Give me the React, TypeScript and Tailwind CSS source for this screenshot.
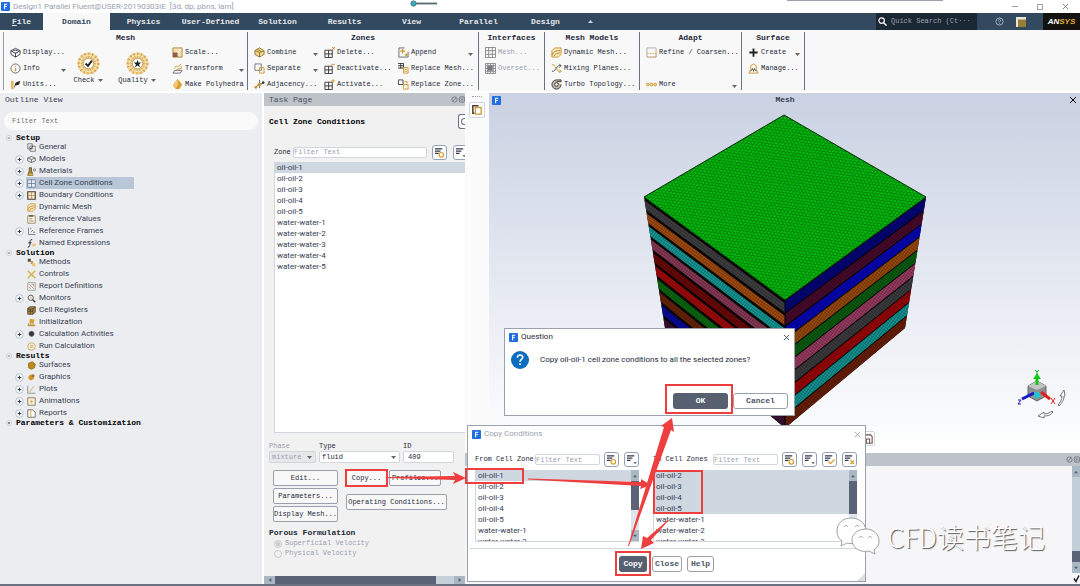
import React from 'react';

const GOLD = '#c9982e';
const INK = '#3b3f4a';

// Small 12x12 drawings shared by the ribbon, the tree and the toolbars
const drawings: Record<string, React.ReactNode> = {
  display: (
    <g fill="none" stroke={INK}>
      <path d="M1 4 6 1.5 11 4v4L6 11 1 8Z M1 4l5 2.5L11 4 M6 6.5V11" />
      <ellipse cx="6" cy="5" rx="3" ry="1.5" fill="#fff" />
    </g>
  ),
  info: (
    <g fill="none" stroke="#6d6a66">
      <circle cx="6" cy="6" r="5" />
      <path d="M6 5.5V9M6 3v1.2" stroke={GOLD} strokeWidth="1.4" />
    </g>
  ),
  units: (
    <g>
      <path d="M1 2h3v9H1z" fill="#e6b867" />
      <path d="M4 11 6 4l5-2-1 4-4 1Z" fill="#222" />
    </g>
  ),
  scale: (
    <g>
      <path d="M1 1h10v10H1z" fill="#f3dfb0" stroke="#ad8740" />
      <path d="M1 6h5v5H1z" fill="#8f5b4a" />
      <path d="M6 6l4-4" stroke="#fff" />
    </g>
  ),
  transform: (
    <g fill="none" stroke={GOLD}>
      <path d="M1 11h8l2-3H3Z" stroke="#6b6b70" />
      <path d="M3 6c0-4 4-2 4-2l3-3M5 7l5-1V3" />
    </g>
  ),
  poly: (
    <g>
      <path d="M6 0 11 6 8 11H4L1 7Z" fill="#d99a29" />
      <path d="M6 0 7 6 4 11 1 7Z" fill="#f0c670" />
    </g>
  ),
  combine: (
    <g fill="#f5d58d" stroke="#8e7434">
      <path d="M1 4 6 1l5 3v4l-5 3-5-3Z" />
      <path d="M1 4l5 2 5-2M6 6v5M3 2.5l6 3" fill="none" />
    </g>
  ),
  separate: (
    <g fill="none">
      <path d="M1 1h7v7H1z" stroke="#77747c" />
      <path d="M6 5h5v6H6z" stroke={GOLD} />
    </g>
  ),
  adjacency: (
    <g>
      <path d="M1 9 6 6l5-2M6 1v9" stroke="#666" fill="none" />
      <circle cx="6" cy="6" r="2" fill={GOLD} />
      <circle cx="10" cy="4" r="1.5" fill={INK} />
      <circle cx="2" cy="9" r="1.5" fill={GOLD} />
    </g>
  ),
  delete: (
    <g fill="none" stroke="#333">
      <path d="M1 3.5h8v8H1zM5 3.5v8M1 7.5h8" />
      <path d="M9 0l3 3m0-3L9 3" stroke="#cc6d24" />
    </g>
  ),
  deactivate: (
    <g fill="none" stroke="#333">
      <path d="M1 3.5h8v8H1zM5 3.5v8M1 7.5h8" />
      <path d="M8 1.5h4" stroke="#d99a29" />
    </g>
  ),
  activate: (
    <g fill="none" stroke="#333">
      <path d="M1 3.5h8v8H1zM5 3.5v8M1 7.5h8" />
      <path d="M8 2h4M10 0v4" stroke="#d99a29" />
    </g>
  ),
  append: (
    <g fill="none">
      <path d="M7 1H1v10h10V5" stroke="#66666c" />
      <path d="M5 2v5M2.500 4.500H8M9 7v3M7.500 8.500h3" stroke={GOLD} strokeWidth="1.400" />
    </g>
  ),
  replaceMesh: (
    <g fill="none">
      <path d="M0 .5h6v5H0M3 0v6M0 3h6" stroke="#333" />
      <path d="M6 5h5v6H6zM7 7h3M7 9h3" stroke={GOLD} />
    </g>
  ),
  replaceZone: (
    <g fill="none">
      <path d="M.5 1h5v5h-5z" stroke="#444" />
      <path d="M7 3h3v2M6 6h5v5H6z" stroke={GOLD} />
    </g>
  ),
  meshGrey: (
    <g fill="none" stroke="#88888c">
      <path d="M.5 .5h11v11H.5zM4 0v12M8 0v12M0 4h12M0 8h12" />
    </g>
  ),
  overset: (
    <g fill="none" stroke="#88888c">
      <path d="M.5 .5h11v11H.5zM3 0v12M6 0v12M9 0v12M0 3h12M0 6h12M0 9h12" />
      <path d="M3 3h5v5H3z" fill="#777" />
    </g>
  ),
  dynamic: (
    <g fill="none" stroke={GOLD}>
      <path d="M1 4 4 1h7v7l-3 3H1Z" fill="#f7e6bd" />
      <path d="M1 9c2-5 5-5 9-5M3 10c3-4 4-2 7-4" stroke="#b57d1a" />
    </g>
  ),
  mixing: (
    <g fill="none">
      <path d="M1 2h2l5 7h3M9 7l2 2-2 2" stroke={GOLD} />
      <path d="M1 9h2l5-6h3M9 1l2 2-2 2" stroke="#555" />
    </g>
  ),
  turbo: (
    <g stroke="#333" fill="none">
      <path d="M6 3h5V1H6a5 5 0 1 0 5 5" fill="#bdb9a8" />
      <circle cx="6" cy="6" r="2" fill="#eee" />
    </g>
  ),
  refine: (
    <g fill="none">
      <path d="M1 1h10v10H1z" stroke="#aaa" />
      <path d="M1 11h10v-4M1 7h10" stroke="#dcb05b" strokeDasharray="2 1" />
    </g>
  ),
  more: (
    <g fill="#f4d9a0" stroke={GOLD}>
      <circle cx="2" cy="6" r="1.5" />
      <circle cx="6" cy="6" r="1.5" />
      <circle cx="10" cy="6" r="1.5" />
    </g>
  ),
  plus: <path d="M6 1.5v9M1.5 6h9" stroke="#222" strokeWidth="2" />,
  manage: (
    <g fill="none" stroke={GOLD}>
      <path d="M1 11 3 7V3l3-2 3 2v4l2 4Z" />
      <path d="M3 9l2-3 1 3 1-3 2 3" stroke="#5a4c30" />
    </g>
  ),
  general: (
    <g fill="none" stroke="#666">
      <path d="M1 1h6v7H1zM4 4h7v7H4z" />
      <path d="M3 6l2 2 3-4" stroke="#333" />
    </g>
  ),
  models: (
    <g fill="none" stroke="#555">
      <path d="M1 4 6 2l5 2v4l-5 2-5-2ZM1 4l5 2 5-2M6 6v4" />
    </g>
  ),
  materials: (
    <g>
      <path d="M3 1h3v4l2 6H1l2-6Z" fill="#a98b38" stroke="#4b4023" />
      <path d="M2 9h6v2H2z" fill="#e4b42d" />
      <circle cx="10" cy="4" r="1.5" fill="none" stroke="#666" />
    </g>
  ),
  cell: (
    <g fill="#e8eef5" stroke="#61768c">
      <path d="M1 1h10v10H1zM6 1v10M1 6h10" />
    </g>
  ),
  boundary: (
    <g fill="#f7e7ca" stroke="#443b33">
      <path d="M1 1h10v10H1z" strokeWidth="1.5" />
      <path d="M6 1v10M1 6h10" stroke="#b38b4a" />
    </g>
  ),
  clipboard: (
    <g fill="#f6f3e8" stroke="#8b7a4c">
      <path d="M1 1h10v10H1z" />
      <path d="M3 0h5v2H3z" fill="#555" />
      <path d="M3 5h4M3 8h6" />
    </g>
  ),
  frames: (
    <g fill="none" stroke="#667">
      <path d="M2 1v9h9M5 7l3-3M5 3V1M8 7h3" />
    </g>
  ),
  fx: (
    <g fill="none">
      <path d="M7 1c-3-1-3 2-3 4S4 11 1 11M2 5h4" stroke="#222" strokeWidth="1.3" />
      <path d="M7 7h5M7 9h4" stroke="#e0a12e" />
    </g>
  ),
  methods: (
    <g>
      <path d="M1 1h4v4H1z" fill="#5a4a3a" />
      <path d="M5 4h3v4H5z" fill="#c59b43" />
      <path d="M7 7h4v4H7z" fill="#e8c465" />
    </g>
  ),
  controls: <path d="M1 1l10 10M11 1 1 11" stroke="#dcae52" strokeWidth="2" />,
  report: (
    <g fill="#f1efe8" stroke="#8a9a7a">
      <path d="M1 1h10v10H1z" />
      <path d="M3 3l6 6M3 7l2 2M6 3h3v3" stroke="#b27f8f" />
    </g>
  ),
  monitors: (
    <g fill="none" stroke="#333">
      <circle cx="5" cy="5" r="3.5" />
      <path d="M7.5 7.5 11 11" strokeWidth="1.8" />
      <path d="M4 5h2" stroke={GOLD} />
    </g>
  ),
  registers: (
    <g fill="#b58b3c" stroke="#40352a">
      <path d="M1 3l3-2h7v7l-3 3H1zM1 4h7v7M8 4l3-3M4.5 4v7M1 7h7" />
    </g>
  ),
  init: (
    <g>
      <path d="M4 1l6 1-1 5H3Z" fill="#dba12c" />
      <path d="M1 9h10v2H1z" fill="#c9952d" />
      <path d="M1 8h9" stroke="#7a6333" strokeDasharray="2 1" />
    </g>
  ),
  dot: <circle cx="6" cy="5" r="3.5" fill="#33343c" stroke="#777" />,
  run: (
    <g fill="#f4ead3" stroke="#bfa05c">
      <circle cx="6" cy="6" r="5" />
      <path d="M4 5h4M4 7h4" />
    </g>
  ),
  surfaces: <path d="M2 3 7 1l4 3-1 5-4 2-4-2Z" fill="#bd8a1d" stroke="#8a6718" />,
  graphics: (
    <g>
      <path d="M2 4l3-2 5 1-1 5-4 2-3-2Z" fill="#d39727" />
      <circle cx="8" cy="3.5" r="2" fill="#9b7440" />
    </g>
  ),
  plots: (
    <g fill="none">
      <path d="M1 1v10h10" stroke="#777" />
      <path d="M3 9c3 0 3-7 7-7" stroke="#caa04b" />
    </g>
  ),
  animations: (
    <g fill="#f8ecd5" stroke="#77684e">
      <path d="M1 1h10v10H1z" />
      <path d="M5 4l3 2-3 2Z" fill={GOLD} stroke="none" />
    </g>
  ),
  reports: (
    <g fill="#faf8f1" stroke="#555">
      <path d="M1 1h6l4 3v7H1z" />
      <path d="M5 1v10" stroke={GOLD} />
    </g>
  ),
  save: (
    <g fill="none" stroke="#6b5347" strokeWidth="1.3">
      <path d="M1 3V1h8l2 2v8H1M4 11V6h4v5M1 7h3" />
    </g>
  ),
  pages: (
    <g fill="none" stroke="#4f3a2a">
      <path d="M8 1H1v9h2" strokeWidth="1.8" />
      <path d="M4 3h7v8H4z" stroke={GOLD} strokeWidth="1.5" />
    </g>
  ),
};

const Icon = ({ name, className = 'size-[11px]' }: { name: string; className?: string }) => (
  <svg viewBox="0 0 12 12" className={`${className} shrink-0`} aria-hidden="true">
    {drawings[name]}
  </svg>
);

const Caret = ({ className = '' }: { className?: string }) => (
  <svg viewBox="0 0 5 3" className={`h-[3px] w-[5px] shrink-0 ${className}`} aria-hidden="true">
    <path d="M0 0h5L2.5 3Z" fill="#666" />
  </svg>
);

const AppLogo = () => (
  <svg viewBox="0 0 10 10" className="size-[9px] shrink-0" aria-hidden="true">
    <rect width="10" height="10" rx="1" fill="#1f6fe0" />
    <path d="M4 8V2.5h3M4 5h2.5" stroke="#fff" strokeWidth="1.2" fill="none" />
  </svg>
);

const Cross = ({ className = 'size-[7px] text-gray-700' }: { className?: string }) => (
  <svg viewBox="0 0 8 8" className={className} aria-hidden="true">
    <path d="M1 1l6 6M7 1 1 7" stroke="currentColor" fill="none" />
  </svg>
);

interface Command {
  icon: string;
  label: string;
  caret?: boolean;
  disabled?: boolean;
}

const Commands = ({ items, className }: { items: (Command | null)[]; className: string }) => (
  <div className={`flex shrink-0 flex-col ${className}`}>
    {items.map((item, i) =>
      item ? (
        <button
          key={item.label}
          disabled={item.disabled}
          className="flex h-4 items-center gap-[2px] whitespace-nowrap disabled:text-gray-400"
        >
          <Icon name={item.icon} />
          <span>{item.label}</span>
          {item.caret && <Caret className="mt-1 ml-auto" />}
        </button>
      ) : (
        <div key={i} className="h-4" />
      )
    )}
  </div>
);

const Group = ({ title, className, children }: { title: string; className: string; children: React.ReactNode }) => (
  <section className={`shrink-0 border-r border-gray-500 ${className}`}>
    <h2 className="h-3 text-center text-[8px] leading-3 font-bold">{title}</h2>
    <div className="flex pl-[6px]">{children}</div>
  </section>
);

const RoundCommand = ({ label, shape, className }: { label: string; shape: React.ReactNode; className: string }) => (
  <button className={`mt-2 flex h-8 flex-col items-center justify-between ${className}`}>
    <svg viewBox="0 0 24 24" className="size-[23px] shrink-0" aria-hidden="true">
      <circle cx="12" cy="12" r="8.5" fill="none" stroke="#f0d294" strokeWidth="6" />
      <circle cx="12" cy="12" r="8.5" fill="none" stroke="#cfa04a" strokeWidth="6" strokeDasharray="1 2.3" />
      <circle cx="12" cy="12" r="8.5" fill="none" stroke="#f7e8c4" />
      <circle cx="12" cy="12" r="5.5" fill="#fff" stroke="#c29a4e" />
      {shape}
    </svg>
    <span className="flex w-full items-center justify-center gap-[3px] leading-[8px]">
      {label}
      <Caret />
    </span>
  </button>
);

const Ribbon = () => (
  <div className="h-[63px] shrink-0 overflow-hidden border-b-2 border-white bg-[#f8f8f8] pt-[2px] pl-[3px]">
    <div className="flex h-[58px] border-l border-gray-400">
      <Group title="Mesh" className="w-[244px]">
        <Commands
          className="w-[56px]"
          items={[
            { icon: 'display', label: 'Display...' },
            { icon: 'info', label: 'Info', caret: true },
            { icon: 'units', label: 'Units...' },
          ]}
        />
        <RoundCommand
          label="Check"
          className="w-[44px]"
          shape={<path d="M9 12l2.5 2.5L15.5 9" stroke="#222" strokeWidth="2" fill="none" />}
        />
        <RoundCommand
          label="Quality"
          className="w-[54px]"
          shape={<path d="M12 8l1 3h3l-2.4 2 1 3-2.6-1.8L9.4 16l1-3L8 11h3Z" fill="#222" />}
        />
        <Commands
          className="ml-[8px] w-[72px]"
          items={[
            { icon: 'scale', label: 'Scale...' },
            { icon: 'transform', label: 'Transform', caret: true },
            { icon: 'poly', label: 'Make Polyhedra' },
          ]}
        />
      </Group>
      <Group title="Zones" className="w-[231px]">
        <Commands
          className="w-[64px]"
          items={[
            { icon: 'combine', label: 'Combine', caret: true },
            { icon: 'separate', label: 'Separate', caret: true },
            { icon: 'adjacency', label: 'Adjacency...' },
          ]}
        />
        <Commands
          className="ml-[6px] w-[68px]"
          items={[
            { icon: 'delete', label: 'Delete...' },
            { icon: 'deactivate', label: 'Deactivate...' },
            { icon: 'activate', label: 'Activate...' },
          ]}
        />
        <Commands
          className="ml-[6px] w-[75px]"
          items={[
            { icon: 'append', label: 'Append', caret: true },
            { icon: 'replaceMesh', label: 'Replace Mesh...' },
            { icon: 'replaceZone', label: 'Replace Zone...' },
          ]}
        />
      </Group>
      <Group title="Interfaces" className="w-[66px]">
        <Commands
          className="w-[56px]"
          items={[
            { icon: 'meshGrey', label: 'Mesh...', disabled: true },
            { icon: 'overset', label: 'Overset...', disabled: true },
          ]}
        />
      </Group>
      <Group title="Mesh Models" className="w-[95px]">
        <Commands
          className="w-[86px]"
          items={[
            { icon: 'dynamic', label: 'Dynamic Mesh...' },
            { icon: 'mixing', label: 'Mixing Planes...' },
            { icon: 'turbo', label: 'Turbo Topology...' },
          ]}
        />
      </Group>
      <Group title="Adapt" className="w-[102px]">
        <Commands
          className="w-[91px]"
          items={[
            { icon: 'refine', label: 'Refine / Coarsen...' },
            null,
            { icon: 'more', label: 'More', caret: true },
          ]}
        />
      </Group>
      <Group title="Surface" className="w-[63px]">
        <Commands
          className="w-[52px]"
          items={[
            { icon: 'plus', label: 'Create', caret: true },
            { icon: 'manage', label: 'Manage...' },
          ]}
        />
      </Group>
    </div>
  </div>
);

const TitleBar = () => (
  <header className="relative flex h-[13px] shrink-0 items-center gap-[3px] bg-white pl-[1px] font-['Roboto',sans-serif] text-[8px] text-gray-400">
    <AppLogo />
    <h1 className="whitespace-pre">Design1 Parallel Fluent@USER-20190303IE  [3d, dp, pbns, lam]</h1>
    <svg viewBox="0 0 32 8" className="absolute top-0 left-[408px] h-[7px] w-8" aria-hidden="true">
      <path d="M3 4h28" stroke="#4f6a75" strokeWidth="2" />
      <circle cx="4" cy="4" r="3" fill="#2bb3c4" stroke="#4f6a75" />
    </svg>
    <div className="absolute top-0 left-[787px] h-[1px] w-[156px] bg-gray-400" />
    <div className="ml-auto flex items-center gap-[19px] pr-[11px]">
      <button aria-label="Minimize" className="h-px w-[6px] bg-gray-400" />
      <button aria-label="Restore" className="size-[6px] border border-gray-400" />
      <button aria-label="Close">
        <Cross className="size-[7px] text-gray-500" />
      </button>
    </div>
  </header>
);

const tabs = ['Domain', 'Physics', 'User-Defined', 'Solution', 'Results', 'View', 'Parallel', 'Design'];

const TabBar = () => (
  <nav className="flex h-[17px] shrink-0 items-stretch bg-[#33495f] text-[8px] font-bold text-gray-200">
    <button className="w-[43px]">
      <u>F</u>ile
    </button>
    {tabs.map((tab) => (
      <button key={tab} className={tab === 'Domain' ? 'w-[67px] bg-[#f8f8f8] text-[#33495f]' : 'w-[67px]'}>
        {tab}
      </button>
    ))}
    <button aria-label="Collapse ribbon" className="pl-[9px]">
      <svg viewBox="0 0 5 3" className="h-[3px] w-[5px]" aria-hidden="true">
        <path d="M0 3h5L2.5 0Z" fill="#cfd6de" />
      </svg>
    </button>
    <div className="ml-auto flex items-center">
      <label className="flex h-full w-[101px] items-center gap-1 bg-[#1c2734] pl-[2px]">
        <svg viewBox="0 0 10 10" className="size-[9px] shrink-0" aria-label="Search">
          <circle cx="4" cy="4" r="3" stroke="#fff" strokeWidth="1.3" fill="none" />
          <path d="M6 6l3.5 3.5" stroke="#fff" strokeWidth="1.5" />
        </svg>
        <input
          className="w-20 text-[7px] font-normal placeholder:text-gray-400"
          placeholder="Quick Search (Ct···"
        />
      </label>
      <button aria-label="Help" className="ml-[18px]">
        <svg viewBox="0 0 10 10" className="size-[9px]">
          <circle cx="5" cy="5" r="4" stroke="#a9b4bf" fill="none" />
          <path d="M3.7 4c0-2 2.8-1.5 2.5 0C6 5 5 5 5 6M5 7v1" stroke="#a9b4bf" fill="none" />
        </svg>
      </button>
      <button aria-label="Layout" className="ml-3">
        <svg viewBox="0 0 10 10" className="size-[10px]">
          <rect width="10" height="10" fill="#e8e4d6" />
          <rect x="2" y="2.5" width="8" height="7.5" fill="#9a7d35" />
        </svg>
      </button>
      <span className="ml-[17px] flex h-full w-[37px] items-center justify-center bg-[#15130f] font-['Liberation_Sans',sans-serif] text-[8px] font-bold italic text-white">
        AN<span className="text-[#e2b23b]">SYS</span>
      </span>
    </div>
  </nav>
);

interface TreeNode {
  label: string;
  icon?: string;
  open?: boolean;
  selected?: boolean;
}

// Nodes without an icon are section headings
const tree: TreeNode[] = [
  { label: 'Setup' },
  { label: 'General', icon: 'general' },
  { label: 'Models', icon: 'models', open: false },
  { label: 'Materials', icon: 'materials', open: false },
  { label: 'Cell Zone Conditions', icon: 'cell', open: false, selected: true },
  { label: 'Boundary Conditions', icon: 'boundary', open: false },
  { label: 'Dynamic Mesh', icon: 'dynamic' },
  { label: 'Reference Values', icon: 'clipboard' },
  { label: 'Reference Frames', icon: 'frames', open: false },
  { label: 'Named Expressions', icon: 'fx' },
  { label: 'Solution' },
  { label: 'Methods', icon: 'methods' },
  { label: 'Controls', icon: 'controls' },
  { label: 'Report Definitions', icon: 'report' },
  { label: 'Monitors', icon: 'monitors', open: false },
  { label: 'Cell Registers', icon: 'registers' },
  { label: 'Initialization', icon: 'init' },
  { label: 'Calculation Activities', icon: 'dot', open: false },
  { label: 'Run Calculation', icon: 'run' },
  { label: 'Results' },
  { label: 'Surfaces', icon: 'surfaces' },
  { label: 'Graphics', icon: 'graphics', open: false },
  { label: 'Plots', icon: 'plots', open: false },
  { label: 'Animations', icon: 'animations', open: false },
  { label: 'Reports', icon: 'reports', open: false },
  { label: 'Parameters & Customization', open: false },
];

const Expander = ({ plus }: { plus: boolean }) => (
  <svg viewBox="0 0 10 10" className="size-full" aria-hidden="true">
    <circle cx="5" cy="5" r="4.3" fill="#f6f8fb" stroke="#a9b3bf" strokeWidth=".8" />
    <path d={plus ? 'M3 5h4M5 3v4' : 'M3 5h4'} stroke="#33435a" strokeWidth="1.2" />
  </svg>
);

const OutlineView = () => (
  <aside className="w-[264px] shrink-0 border-r-2 border-white bg-[#ecedf0]">
    <h2 className="pt-[1px] pl-[5px] text-[8px] leading-3 text-gray-700">Outline View</h2>
    <input
      aria-label="Filter outline"
      placeholder="Filter Text"
      className="mt-[6px] ml-1 h-[18px] w-[254px] rounded-full bg-[#fafafa] px-2 placeholder:text-gray-500"
    />
    <ul className="mt-[4px]">
      {tree.map((node) =>
        node.icon ? (
          <li key={node.label} className="flex h-3 items-center pl-[15px]">
            <span className="size-[9px] shrink-0">{node.open === false && <Expander plus />}</span>
            <span
              className={`ml-[2px] flex h-full items-center gap-[3px] pl-[1px] font-['Roboto',sans-serif] text-[8px] text-gray-700 ${node.selected ? 'w-[108px] bg-[#b8c6d8]' : ''}`}
            >
              <Icon name={node.icon} className="size-[9px]" />
              {node.label}
            </span>
          </li>
        ) : (
          <li key={node.label} className="flex h-[7px] items-center gap-1 pl-[6px] text-[8px] leading-[7px] font-bold text-black">
            <span className="size-[6px] shrink-0">
              <Expander plus={node.open === false} />
            </span>
            {node.label}
          </li>
        )
      )}
    </ul>
  </aside>
);

const FilterButton = ({ label, mark }: { label: string; mark: string }) => (
  <button
    aria-label={label}
    className="flex size-[15px] shrink-0 items-center justify-center rounded-[3px] border border-slate-400 bg-white"
  >
    <svg viewBox="0 0 12 12" className="size-[11px] shrink-0" fill="none" aria-hidden="true">
      <path d="M1 2h8M1 4.5h6M1 7h4" stroke="#35384a" strokeWidth="1.4" />
      {mark === 'circle' && <circle cx="8" cy="8.5" r="2.5" stroke="#dd9a2e" strokeWidth="1.3" />}
      {mark === 'caret' && <path d="M8 9h4l-2 2Z" fill="#555" />}
      {mark === 'check' && <path d="M5 8.5l2 2L11.5 6" stroke="#dd9a2e" strokeWidth="1.4" />}
      {mark === 'cross' && <path d="M7 7l4 4M11 7l-4 4" stroke="#c99a1e" strokeWidth="1.4" />}
    </svg>
  </button>
);

const ZoneList = ({ zones, selected, className = '' }: { zones: string[]; selected: string[]; className?: string }) => (
  <ul className={`overflow-hidden bg-white font-['Roboto',sans-serif] text-[8px] leading-[11px] text-gray-700 ${className}`}>
    {zones.map((zone) => (
      <li key={zone} className={selected.includes(zone) ? 'bg-[#cfd7e1] pl-[2px]' : 'pl-[2px]'}>
        {zone}
      </li>
    ))}
  </ul>
);

const PanelMarks = () => (
  <svg viewBox="0 0 16 8" className="h-[7px] w-[14px] shrink-0" fill="none" stroke="#70757d" aria-hidden="true">
    <circle cx="4" cy="4" r="3" />
    <path d="M2.5 5.5l3-3" />
    <rect x="9.500" y="1" width="6" height="6" rx="1.5" />
    <path d="M11 2.5l3 3M14 2.5l-3 3" />
  </svg>
);

const ScrollArrow = ({ d, className }: { d: string; className: string }) => (
  <span className={`flex shrink-0 items-center justify-center bg-[#a9b8c2] ${className}`}>
    <svg viewBox="0 0 6 6" className="size-1" aria-hidden="true">
      <path d={d} fill="#4f6574" />
    </svg>
  </span>
);

const UP = 'M0 5h6L3 1Z';
const DOWN = 'M0 1h6L3 5Z';

const oil = ['oil-oil-1', 'oil-oil-2', 'oil-oil-3', 'oil-oil-4', 'oil-oil-5'];
const water = ['water-water-1', 'water-water-2', 'water-water-3', 'water-water-4', 'water-water-5'];

const outlineButton = 'rounded-[2px] border border-gray-400 bg-[#f8f8f8] whitespace-nowrap';
const filterInput = 'rounded-[2px] border border-gray-300 bg-white placeholder:text-gray-400';

const SelectField = ({ label, value, disabled, className }: { label: string; value: string; disabled?: boolean; className: string }) => (
  <label className={`${className} ${disabled ? 'text-gray-400' : ''}`}>
    {label}
    <span className="relative block">
      <select
        disabled={disabled}
        className="block h-[12px] w-full appearance-none rounded-[2px] border border-gray-300 bg-white px-[2px] disabled:bg-[#e6e7e9]"
      >
        <option>{value}</option>
      </select>
      <Caret className="pointer-events-none absolute top-[5px] right-1" />
    </span>
  </label>
);

const TaskPage = () => (
  <section className="flex w-[201px] shrink-0 flex-col overflow-hidden bg-[#f1f1f2]">
    <div className="flex h-[13px] shrink-0 items-center justify-between bg-[#bec2c9] pl-[5px] text-[8px] text-gray-600">
      <h2>Task Page</h2>
      <PanelMarks />
    </div>
    <div className="mt-2 flex h-[15px] shrink-0 items-center pl-[5px]">
      <h3 className="text-[8px] font-bold text-black">Cell Zone Conditions</h3>
      <button aria-label="Help" className="ml-auto h-[15px] w-[7px] rounded-l-[3px] border border-r-0 border-gray-500 bg-white pl-[2px]">
        <span className="block h-[7px] w-1 rounded-l-full border border-r-0 border-gray-500" />
      </button>
    </div>
    <div className="mt-[15px] flex h-4 shrink-0 items-center overflow-hidden pl-[10px]">
      <label htmlFor="zone-filter" className="w-[19px] shrink-0">
        Zone
      </label>
      <input id="zone-filter" placeholder="Filter Text" className={`mr-[5px] h-[11px] w-[134px] shrink-0 ${filterInput}`} />
      <FilterButton label="Filter options" mark="circle" />
      <span className="ml-[6px]">
        <FilterButton label="List options" mark="caret" />
      </span>
    </div>
    <ZoneList
      zones={[...oil, ...water]}
      selected={['oil-oil-1']}
      className="mt-[2px] ml-[10px] h-[271px] shrink-0 border-b border-l border-gray-300"
    />
    <div className="mt-[8px] flex shrink-0 gap-[3px] pl-[5px] leading-[10px]">
      <SelectField label="Phase" value="mixture" disabled className="w-[47px]" />
      <SelectField label="Type" value="fluid" className="w-[81px]" />
      <label className="w-[51px]">
        ID
        <input defaultValue="409" className="block h-[12px] w-full rounded-[2px] border border-gray-300 bg-white px-1" />
      </label>
    </div>
    <div className="mt-[7px] flex shrink-0 pl-[9px]">
      <div className="flex w-[65px] flex-col gap-[2px]">
        <button className={`h-[16px] ${outlineButton}`}>Edit...</button>
        <button className={`h-[16px] ${outlineButton}`}>Parameters...</button>
        <button className={`h-[16px] ${outlineButton}`}>Display Mesh...</button>
      </div>
      <div className="ml-2 flex flex-col gap-2">
        <div className="flex gap-[2px]">
          <button className={`h-[16px] w-[41px] ${outlineButton}`}>Copy...</button>
          <button className={`h-[16px] w-[52px] ${outlineButton}`}>Profiles...</button>
        </div>
        <button className={`h-[16px] w-[101px] ${outlineButton}`}>Operating Conditions...</button>
      </div>
    </div>
    <fieldset disabled className="mt-[6px] flex flex-col gap-px pl-[5px] text-gray-400">
      <legend className="mb-px text-[8px] leading-[10px] font-bold text-gray-800">Porous Formulation</legend>
      <label className="flex h-[9px] items-center gap-[3px] pl-[5px]">
        <input type="radio" name="velocity" defaultChecked className="size-[8px]" />
        Superficial Velocity
      </label>
      <label className="flex h-[9px] items-center gap-[3px] pl-[5px]">
        <input type="radio" name="velocity" className="size-[8px]" />
        Physical Velocity
      </label>
    </fieldset>
    <div className="mt-auto flex h-2 shrink-0 bg-[#c5d0d9]">
      <ScrollArrow d="M5 0v6L1 3Z" className="w-[11px]" />
      <div className="w-[161px] bg-[#5b6476]" />
      <ScrollArrow d="M1 0v6l4-3Z" className="ml-auto w-[11px]" />
    </div>
  </section>
);

const leftBands = ['#3f3f42', '#a34c10', '#159a98', '#8a3a58', '#6e0808', '#a50a0a', '#0b6a12', '#6a2409', '#0909a0', '#3a1034'];
const rightBands = ['#04047a', '#4a0a2c', '#0606b8', '#9a4a0c', '#0a5e10', '#9a3c62', '#3c3c3e', '#9c0508', '#129493', '#6a1f08'];

// Corner lines of the block: each side face runs from its outer edge to the shared front edge
const lerp = (a: number, b: number, t: number) => a + (b - a) * t;
const bandPoints = (outer: [number, number], outerEnd: [number, number], i: number, gap: number) => {
  const t0 = (i + gap) / 10;
  const t1 = (i + 1) / 10;
  return [
    [lerp(outer[0], outerEnd[0], t0), lerp(outer[1], outerEnd[1], t0)],
    [785, lerp(300, 428, t0)],
    [785, lerp(300, 428, t1)],
    [lerp(outer[0], outerEnd[0], t1), lerp(outer[1], outerEnd[1], t1)],
  ]
    .map((p) => p.join(','))
    .join(' ');
};

const MeshScene = () => (
  <svg viewBox="489 93 591 360" preserveAspectRatio="xMidYMid slice" className="size-full" aria-label="Mesh view">
    <defs>
      <pattern id="hex" width="3.6" height="5.8" patternUnits="userSpaceOnUse" patternTransform="rotate(8)">
        <path d="M0 .9 1.8 0l1.8.9v2L1.8 3.8 0 2.9ZM1.8 3.8v2" fill="none" stroke="#033a05" strokeWidth=".5" />
      </pattern>
      <pattern id="grain" width="2.5" height="2.5" patternUnits="userSpaceOnUse" patternTransform="rotate(35)">
        <path d="M0 0h2.5M0 0v2.5" stroke="#000" strokeOpacity=".5" strokeWidth=".7" />
      </pattern>
    </defs>
    <path d="M644 197 785 300 926 197 905 328 785 428 665 328Z" fill="#0a0505" />
    {leftBands.map((fill, i) => (
      <polygon key={fill} points={bandPoints([644, 197], [665, 328], i, 0.25)} fill={fill} />
    ))}
    {rightBands.map((fill, i) => (
      <polygon key={fill} points={bandPoints([926, 197], [905, 328], i, 0.1)} fill={fill} />
    ))}
    <path d="M644 197 785 300 926 197 905 328 785 428 665 328Z" fill="url(#grain)" />
    <path d="M784 115 926 197 785 300 644 197Z" fill="#02c00c" />
    <path d="M784 115 926 197 785 300 644 197Z" fill="url(#hex)" stroke="#062c06" />
    <path d="M785 300V428" stroke="#000" />
    {/* Orientation triad */}
    <path d="M1028 386l9-5 9 5v10l-9 5-9-5Z" fill="#8e9192" stroke="#666" />
    <path d="M1028 386l9 4 9-4-9-5Z" fill="#c3c6c6" />
    <path d="M1034 393l-12 6" stroke="#1717c8" strokeWidth="3" />
    <path d="M1041 392l9 7" stroke="#e02020" strokeWidth="3" />
    <path d="M1037 385v-8" stroke="#14c81c" strokeWidth="3" />
    <path d="M1033 379l4-6 4 6Z" fill="#14c81c" />
    <circle cx="1037" cy="395" r="3" fill="#1cc7d2" />
    <path d="M1035 370l2 2 2-2M1037 372v3" stroke="#18bd20" fill="none" />
    <path d="M1018 400h3l-3 4h3" stroke="#1717c8" fill="none" />
    <path d="M1051 398l4 6M1055 398l-4 6" stroke="#e02020" />
    <path d="M1052 411c-3 2-5 3-8 3v-2l-6 4 6 2v-2c4 0 7-1 9-4Z" fill="#fff" stroke="#777" />
    <path d="M1058 405c2-2 4-6 4-9h-2l4-6 1 6h-1c0 4-2 7-5 10Z" fill="#fff" stroke="#777" />
  </svg>
);

const GraphicsWindow = () => (
  <div className="flex h-[360px] shrink-0">
    <div className="flex w-6 shrink-0 flex-col items-center bg-[#fbfbfb] pt-[3px]">
      <span className="w-[10px] border-t border-dotted border-gray-400" />
      <button aria-label="Views" className="mt-[5px] flex size-4 items-center justify-center rounded-[2px] border border-gray-300 bg-white">
        <Icon name="pages" className="size-[10px]" />
      </button>
    </div>
    <div className="relative min-w-0 flex-1 bg-linear-to-b from-[#c9d1e2] to-white">
      <MeshScene />
      <div className="absolute inset-x-0 top-0 flex h-[14px] items-center justify-between px-[3px]">
        <AppLogo />
        <h2 className="text-[8px] font-bold text-gray-700">Mesh</h2>
        <button aria-label="Close view">
          <Cross className="size-[8px] text-black" />
        </button>
      </div>
      <button
        aria-label="Save picture"
        className="absolute bottom-[7px] left-[371px] flex size-[15px] items-center justify-center rounded-[2px] border border-gray-300 bg-white"
      >
        <Icon name="save" className="size-[10px]" />
      </button>
    </div>
  </div>
);

const ConsoleWindow = () => (
  <div className="flex min-h-0 flex-1 flex-col bg-[#f6f6f8]">
    <div className="flex h-[13px] shrink-0 items-center justify-end bg-[#bec2c9]">
      <PanelMarks />
    </div>
    <div className="flex min-h-0 flex-1 justify-end">
      <div className="flex w-2 flex-col bg-[#c3cfd8]">
        <ScrollArrow d={UP} className="h-[11px]" />
        <div className="mt-auto h-[11px] bg-[#5b6476]" />
        <ScrollArrow d={DOWN} className="h-[11px]" />
        <svg viewBox="0 0 8 10" className="h-[11px] w-2 bg-[#f6f6f8]" aria-hidden="true">
          <path d="M2 5l2 3 3-6" stroke="#222" strokeWidth="1.5" fill="none" />
        </svg>
      </div>
    </div>
  </div>
);

const solidButton = 'h-4 rounded-[3px] bg-[#566071] text-[8px] font-bold text-white';
const plainButton = 'h-4 rounded-[3px] border border-gray-400 bg-white text-[8px] font-bold text-gray-600';

const QuestionDialog = () => (
  <div role="dialog" aria-label="Question" className="absolute top-[328px] left-[504px] flex h-[88px] w-[291px] flex-col border border-gray-400 bg-white font-['Roboto',sans-serif] text-[8px] text-gray-800">
    <div className="flex h-4 items-center gap-[3px] px-1">
      <AppLogo />
      <h2>Question</h2>
      <button aria-label="Close" className="ml-auto">
        <Cross />
      </button>
    </div>
    <div className="mt-[6px] flex items-center gap-[11px] pl-[6px]">
      <svg viewBox="0 0 18 18" className="size-[18px]" aria-hidden="true">
        <circle cx="9" cy="9" r="9" fill="#0c6cbd" />
        <path d="M6.3 6.8c0-4 5.6-3.5 5.4-.3C11.6 8.3 9 8.5 9 10.7M9 12.3v1.8" stroke="#fff" strokeWidth="1.6" fill="none" />
      </svg>
      <p>Copy oil-oil-1 cell zone conditions to all the selected zones?</p>
    </div>
    <div className="mt-auto flex justify-end gap-[5px] pr-[6px] pb-[6px] font-['Liberation_Mono',monospace]">
      <button className={`w-[55px] ${solidButton}`}>OK</button>
      <button className={`w-[55px] ${plainButton}`}>Cancel</button>
    </div>
  </div>
);

const CopyList = ({ id, label, zones, selected, marks, thumb, down }: {
  id: string;
  label: string;
  zones: string[];
  selected: string[];
  marks: string[];
  thumb: string;
  down?: boolean;
}) => (
  <div>
    <div className="flex h-[15px] items-center">
      <label htmlFor={id} className="w-[60px] shrink-0 whitespace-nowrap">
        {label}
      </label>
      <input id={id} placeholder="Filter Text" className={`h-[11px] w-[65px] ${filterInput}`} />
      <span className="ml-[4px] flex gap-[5px]">
        {marks.map((mark) => (
          <FilterButton key={mark} label={`${label} ${mark}`} mark={mark} />
        ))}
      </span>
    </div>
    <div className="mt-[3px] flex h-[72px] border-b border-l border-gray-300">
      <ZoneList zones={zones} selected={selected} className="flex-1" />
      <div className="flex w-2 flex-col bg-[#dfe5ea]">
        <ScrollArrow d={UP} className="h-[11px]" />
        <div className={`bg-[#5b6476] ${thumb}`} />
        {down && <ScrollArrow d={DOWN} className="mt-auto h-[11px]" />}
      </div>
    </div>
  </div>
);

const CopyDialog = () => (
  <div role="dialog" aria-label="Copy Conditions" className="absolute top-[425px] left-[467px] flex h-[157px] w-[399px] flex-col border border-gray-400 bg-white">
    <div className="flex h-4 items-center gap-[3px] px-1 font-['Roboto',sans-serif] text-[8px] text-gray-400">
      <AppLogo />
      <h2>Copy Conditions</h2>
      <button aria-label="Close" className="ml-auto">
        <Cross className="size-[7px] text-gray-400" />
      </button>
    </div>
    <div className="mt-[10px] flex justify-between pr-2 pl-[7px]">
      <CopyList
        id="from-filter"
        label="From Cell Zone"
        zones={[...oil, ...water.slice(0, 2)]}
        selected={['oil-oil-1']}
        marks={['circle', 'caret']}
        thumb="h-[29px]"
        down
      />
      <CopyList
        id="to-filter"
        label="To Cell Zones"
        zones={[...oil.slice(1), ...water.slice(0, 3)]}
        selected={oil.slice(1)}
        marks={['circle', 'caret', 'check', 'cross']}
        thumb="h-[33px]"
      />
    </div>
    <div className="mx-[2px] mt-[6px] flex justify-center gap-[5px] border-t border-gray-300 pt-[7px]">
      <button className={`w-[28px] ${solidButton}`}>Copy</button>
      <button className={`w-[30px] ${plainButton}`}>Close</button>
      <button className={`w-[27px] ${plainButton}`}>Help</button>
    </div>
    <svg viewBox="0 0 8 8" className="absolute right-0 bottom-0 size-2" aria-hidden="true">
      <path d="M8 0v8H0Z" fill="#dcdee2" />
    </svg>
  </div>
);

// Red step marks drawn over the windows
const Annotations = () => (
  <svg viewBox="0 0 1080 586" className="pointer-events-none absolute top-0 left-0 h-[586px] w-[1080px]" aria-hidden="true">
    <g fill="none" stroke="#ee3e3e" strokeWidth="2">
      <rect x="346" y="470" width="41" height="16" />
      <rect x="466" y="469" width="57" height="14" />
      <rect x="654" y="471" width="48" height="42" />
      <rect x="616" y="552" width="34" height="23" />
      <rect x="666" y="385" width="66" height="28" />
    </g>
    <g fill="#ee3e3e">
      <path d="M388 477 455 476 453 472 466 478 453 484 455 480 388 478Z" />
      <path d="M528 478.5 641 482 641 479 651 485 640 489 641 486 528 479.5Z" />
      <path d="M628 546 664 427 661 426 672 418 674 432 671 430 629 546Z" />
      <path d="M669 520 651 540 654 543 641 549 643 536 647 538 668 520Z" />
    </g>
  </svg>
);

const Watermark = () => (
  <div className="absolute right-[35px] bottom-[27px] flex items-center gap-[6px]">
    <svg viewBox="0 0 46 40" className="h-10 w-[46px]" fill="#fff" stroke="#8a8a8a" strokeWidth=".8" aria-hidden="true">
      <path d="M15 1C6 1 1 7 1 14c0 5 2 8 5 10l-1 5 6-3c8 2 20-1 19-13C29 5 22 1 15 1Z" />
      <path d="M30 12c-8 0-14 5-14 11 0 8 8 13 17 11l6 3-1-4c3-2 5-5 5-9 0-7-6-12-13-12Z" />
      <g fill="none">
        <path d="M8 10c1-2 3-2 4 0M19 10c1-2 3-2 4 0M23 21c1-2 3-2 4 0M32 21c1-2 3-2 4 0" />
      </g>
    </svg>
    <span className="font-['Noto_Sans_CJK_SC',sans-serif] text-[27px] leading-8 font-light whitespace-nowrap text-white [text-shadow:1px_1px_1px_#555]">
      CFD读书笔记
    </span>
  </div>
);

export default function App() {
  return (
    <div className="relative flex h-screen w-full flex-col overflow-hidden border-b-2 border-gray-500 bg-white font-['Liberation_Mono',monospace] text-[7px] text-gray-800">
      <TitleBar />
      <TabBar />
      <Ribbon />
      <main className="flex min-h-0 flex-1">
        <OutlineView />
        <TaskPage />
        <div className="flex min-w-0 flex-1 flex-col">
          <GraphicsWindow />
          <ConsoleWindow />
        </div>
      </main>
      <QuestionDialog />
      <CopyDialog />
      <Annotations />
      <Watermark />
    </div>
  );
}
